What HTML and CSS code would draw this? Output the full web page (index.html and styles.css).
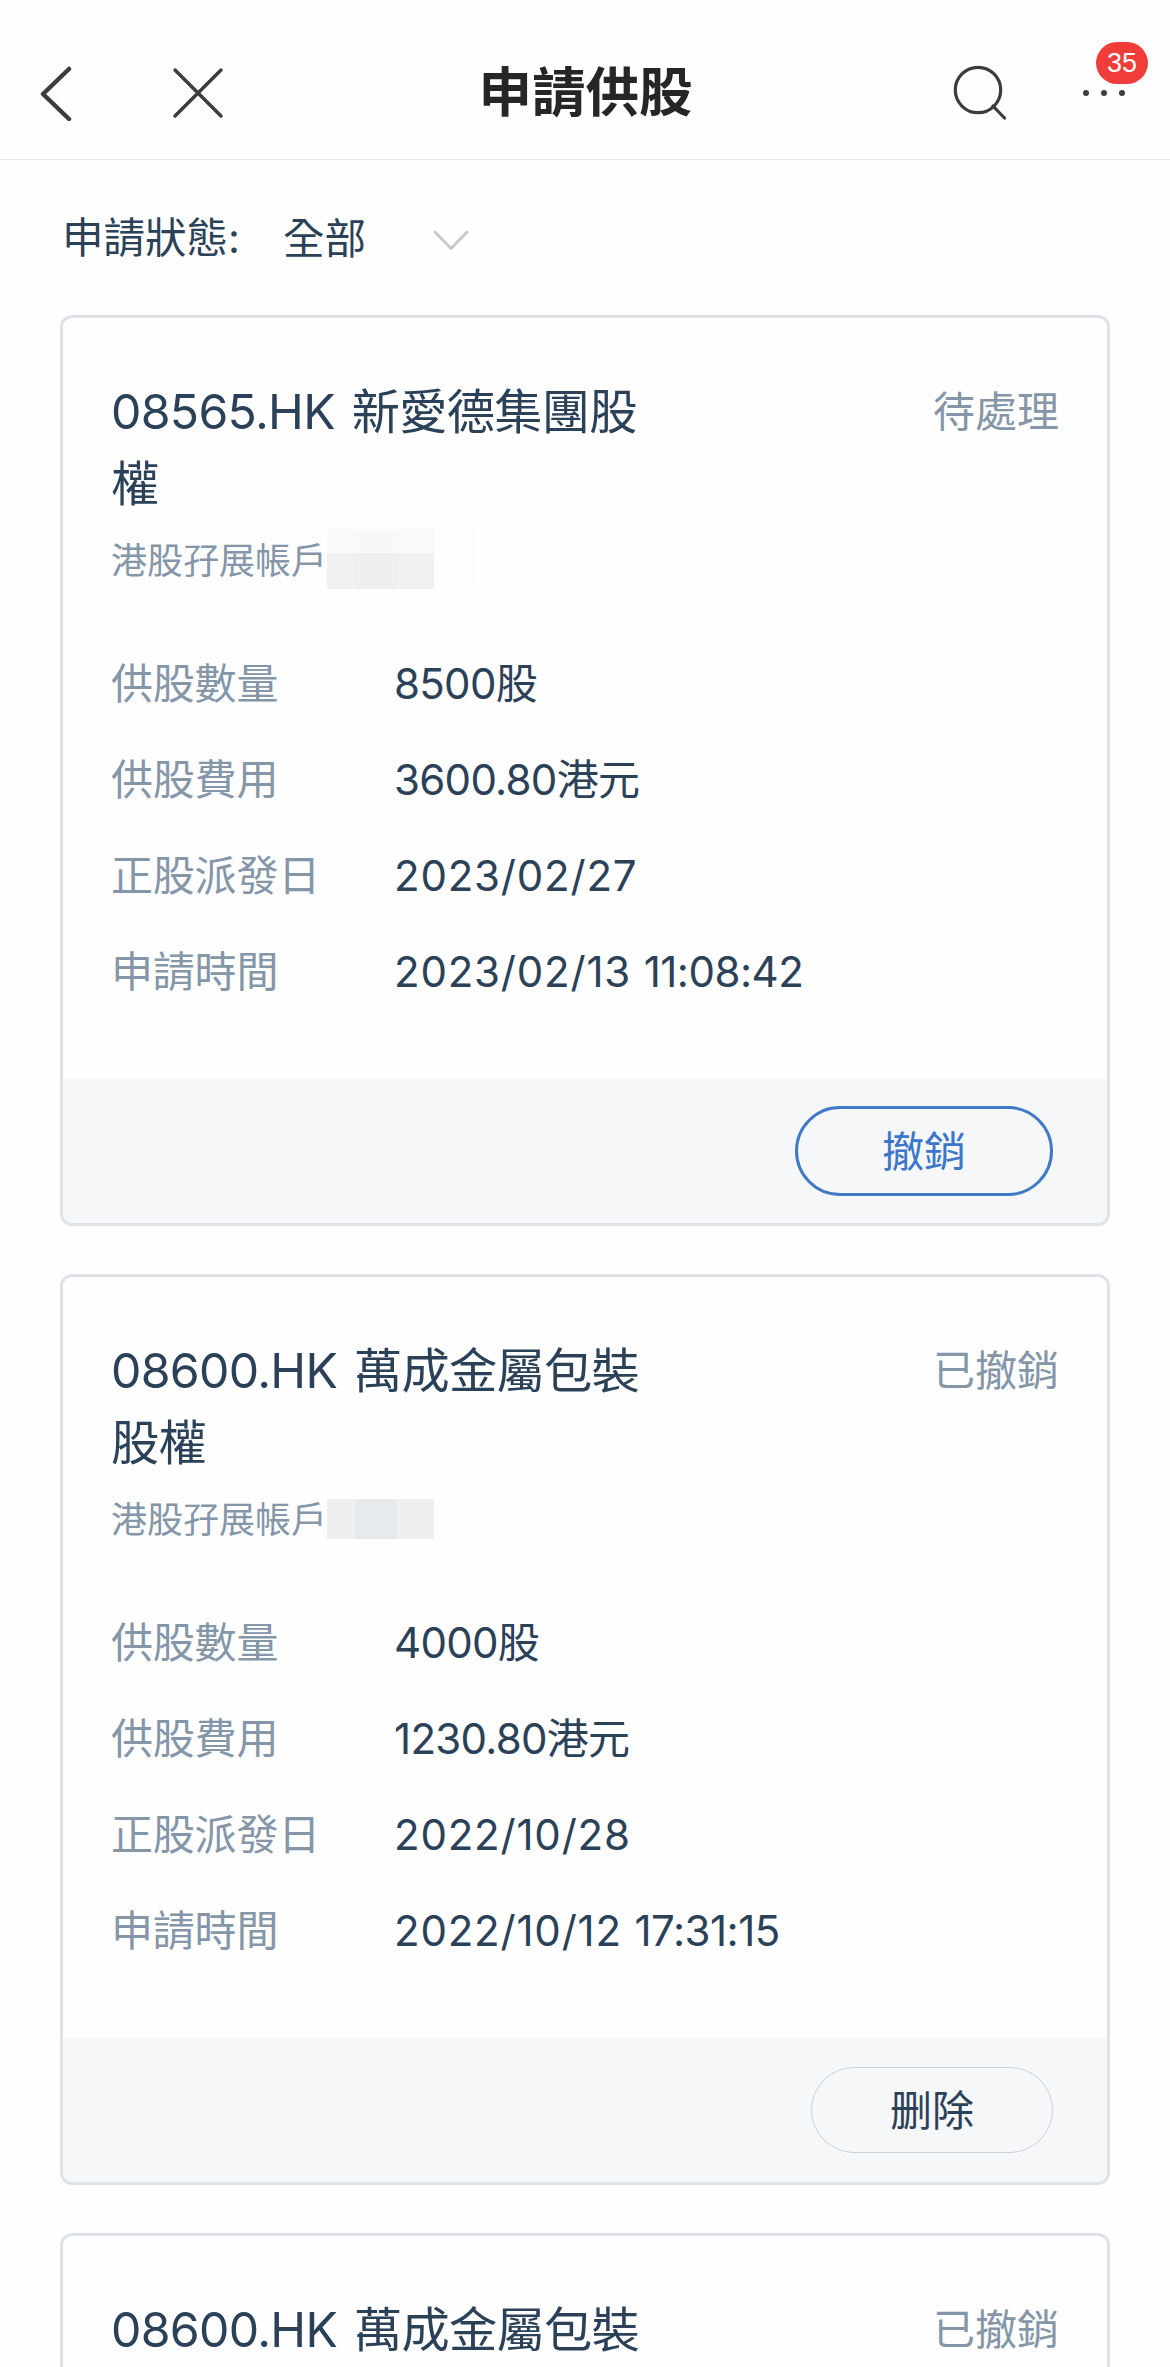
FILE: index.html
```html
<!DOCTYPE html>
<html lang="zh-Hant">

<head>
    <meta charset="UTF-8">
    <meta name="viewport" content="width=device-width, initial-scale=1.0">
    <title>申請供股</title>
    <link rel="stylesheet" href="styles.css">
</head>

<body>
    <header class="navbar">
        <div class="nav-left">
            <svg class="icon-back" width="36" height="56" viewBox="0 0 36 56">
                <path d="M33 4 L7 29 L33 54" />
            </svg>
            <svg class="icon-close" width="54" height="54" viewBox="0 0 54 54">
                <path d="M4 4 L50 50 M50 4 L4 50" />
            </svg>
        </div>
        <h1 class="nav-title">申請供股</h1>
        <div class="nav-right">
            <svg class="icon-search" width="58" height="58" viewBox="0 0 58 58">
                <circle cx="26" cy="26" r="22.7" />
                <path d="M41 42 L52.5 54" />
            </svg>
            <div class="more">
                <span class="dot"></span>
                <span class="dot"></span>
                <span class="dot"></span>
                <span class="badge">35</span>
            </div>
        </div>
    </header>

    <div class="filter">
        <span class="filter-label">申請狀態:</span>
        <span class="filter-value">全部</span>
        <svg class="icon-down" width="36" height="22" viewBox="0 0 36 22">
            <path d="M2 2 L18 18.5 L34 2" />
        </svg>
    </div>

    <main class="list">
        <section class="card">
            <div class="card-body">
                <div class="card-head">
                    <h2 class="stock">08565.HK 新愛德集團股權</h2>
                    <span class="status">待處理</span>
                </div>
                <div class="account">港股孖展帳戶<span class="mask mask-tall"><i></i><i></i><i></i><i></i></span></div>
                <dl class="info">
                    <dt>供股數量</dt>
                    <dd>8500股</dd>
                    <dt>供股費用</dt>
                    <dd>3600.80港元</dd>
                    <dt>正股派發日</dt>
                    <dd class="date">2023/02/27</dd>
                    <dt>申請時間</dt>
                    <dd class="date">2023/02/13 <span class="time">11:08:42</span></dd>
                </dl>
            </div>
            <div class="card-foot">
                <button class="btn btn-primary">撤銷</button>
            </div>
        </section>

        <section class="card">
            <div class="card-body">
                <div class="card-head">
                    <h2 class="stock">08600.HK 萬成金屬包裝股權</h2>
                    <span class="status">已撤銷</span>
                </div>
                <div class="account">港股孖展帳戶<span class="mask"><i></i><i></i><i></i></span></div>
                <dl class="info">
                    <dt>供股數量</dt>
                    <dd>4000股</dd>
                    <dt>供股費用</dt>
                    <dd>1230.80港元</dd>
                    <dt>正股派發日</dt>
                    <dd class="date">2022/10/28</dd>
                    <dt>申請時間</dt>
                    <dd class="date">2022/10/12 <span class="time">17:31:15</span></dd>
                </dl>
            </div>
            <div class="card-foot">
                <button class="btn">删除</button>
            </div>
        </section>

        <section class="card card-last">
            <div class="card-body">
                <div class="card-head">
                    <h2 class="stock">08600.HK 萬成金屬包裝</h2>
                    <span class="status">已撤銷</span>
                </div>
            </div>
        </section>
    </main>
</body>

</html>
```

FILE: styles.css
```css
* {
    box-sizing: border-box;
    margin: 0;
    padding: 0;
}

body {
    height: 2367px;
    overflow: hidden;
    background-color: #fefefe;
    color: #2b4158;
    font-family: Inter, "Noto Sans CJK TC", sans-serif;
    font-size: 42px;
}

svg {
    display: block;
    fill: none;
    stroke: #3c3c3c;
    stroke-linecap: round;
    stroke-linejoin: round;
}

/* top bar */
.navbar {
    display: grid;
    grid-template-columns: 1fr auto 1fr;
    align-items: center;
    height: 160px;
    padding: 26px 45px 0 36px;
    border-bottom: 1px solid #e4e4e4;
}

.nav-left,
.nav-right {
    display: flex;
    align-items: center;
}

.nav-left {
    gap: 99px;
}

.nav-right {
    justify-content: flex-end;
    gap: 73px;
}

.icon-back {
    stroke-width: 4.5;
}

.icon-close {
    stroke-width: 3.5;
}

.icon-search {
    stroke-width: 3.2;
}

.nav-title {
    padding-left: 10px;
    color: #262626;
    font-size: 53.5px;
    line-height: 72px;
    font-weight: 700;
}

.more {
    position: relative;
    display: flex;
    gap: 12px;
}

.dot {
    width: 6px;
    height: 6px;
    border-radius: 50%;
    background-color: #3c3c3c;
}

.badge {
    position: absolute;
    left: 13px;
    bottom: 12px;
    width: 52px;
    height: 42px;
    border-radius: 21px;
    background-color: #f13d3a;
    color: #fff;
    font-family: "Liberation Sans", sans-serif;
    font-size: 27px;
    line-height: 42px;
    text-align: center;
}

/* status filter */
.filter {
    display: flex;
    align-items: center;
    height: 155px;
    padding-left: 62px;
}

.filter-label {
    padding-bottom: 6px;
    font-size: 41.5px;
}

.filter-value {
    margin-left: 43px;
    padding-bottom: 3px;
    font-size: 41.5px;
}

.icon-down {
    margin: 6px 0 0 67px;
    stroke: #c8c8c8;
    stroke-width: 2.8;
}

/* cards */
.list {
    display: flex;
    flex-direction: column;
    gap: 48px;
    padding: 0 60px;
}

.card {
    height: 911px;
    border: 3px solid #dde3e8;
    border-radius: 12px;
    overflow: hidden;
}

.card-last {
    height: 134px;
    border-bottom: none;
    border-radius: 12px 12px 0 0;
}

.card-body {
    height: 761px;
    padding: 58px 48px 0;
}

.card-head {
    display: flex;
    justify-content: space-between;
    align-items: flex-start;
}

.stock {
    width: 550px;
    font-size: 48.2px;
    font-weight: 400;
    line-height: 72px;
    letter-spacing: -0.7px;
    word-spacing: 4px;
}

.status {
    color: #8496a8;
    line-height: 71px;
}

.account {
    display: flex;
    align-items: center;
    height: 76px;
    color: #8496a8;
    font-size: 36px;
}

/* hidden account number */
.mask {
    display: grid;
    grid-template-columns: 28px 42px 37px;
    height: 40px;
    margin-top: 3px;
}

.mask i {
    background-color: #edeff1;
}

.mask i:nth-child(2) {
    background-color: #e6eaed;
}

.mask-tall {
    grid-template-columns: 28px 42px 37px 43px;
    height: 60px;
    margin-top: 1px;
}

.mask-tall i {
    background: linear-gradient(#f8f9fa 24px, #f0f1f3 24px);
}

.mask-tall i:nth-child(2) {
    background: linear-gradient(#f7f8fa 24px, #eeeff1 24px);
}

.mask-tall i:nth-child(4) {
    background: #fdfdfd;
}

.info {
    display: grid;
    grid-template-columns: 283px 1fr;
    margin-top: 40px;
    line-height: 96px;
}

.info dt {
    color: #8496a8;
    letter-spacing: -0.2px;
}

.info dd {
    letter-spacing: -0.7px;
}

.info .date {
    letter-spacing: 0.8px;
}

.time {
    letter-spacing: -0.5px;
}

.card-foot {
    display: flex;
    justify-content: flex-end;
    align-items: center;
    height: 144px;
    padding-right: 54px;
    background-color: #f5f7f9;
}

.btn {
    width: 242px;
    height: 86px;
    padding-bottom: 5px;
    border: 1px solid #c9cfd6;
    border-radius: 45px;
    background: none;
    color: #2b4158;
    font: inherit;
}

.btn-primary {
    width: 258px;
    height: 90px;
    border: 3px solid #4079c6;
    color: #3c76c8;
}
```
